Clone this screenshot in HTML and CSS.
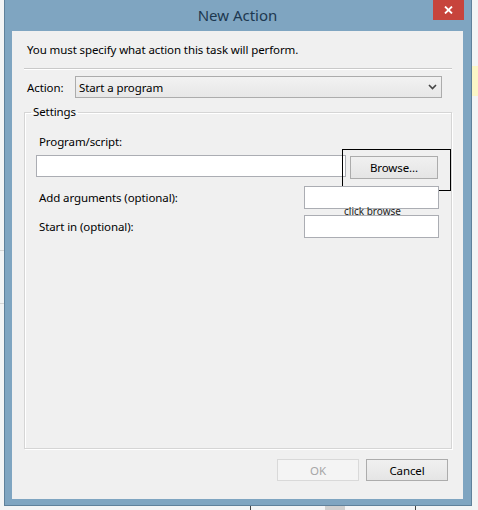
FILE: index.html
```html
<!DOCTYPE html>
<html>
<head>
<meta charset="utf-8">
<title>New Action</title>
<link rel="stylesheet" href="styles.css">
</head>
<body>
<div class="window">
  <div class="titlebar">
    <span class="title">New Action</span>
    <div class="close">
      <svg width="9" height="8" viewBox="0 0 9 8"><path d="M1 0.5 L8 7.5 M8 0.5 L1 7.5" stroke="#fff" stroke-width="1.8" fill="none"/></svg>
    </div>
  </div>
  <div class="client">
    <p class="intro">You must specify what action this task will perform.</p>
    <div class="sep"></div>
    <div class="action-row">
      <span class="action-label">Action:</span>
      <div class="combo">
        <span>Start a program</span>
        <svg class="chev" width="9" height="6" viewBox="0 0 9 6"><polyline points="1,1 4.5,4.5 8,1" stroke="#444" stroke-width="1.6" fill="none"/></svg>
      </div>
    </div>
    <fieldset class="settings">
      <legend>Settings</legend>
      <div class="field-label">Program/script:</div>
      <div class="program-row">
        <div class="textbox program"></div>
        <div class="btn browse">Browse...</div>
        <div class="highlight"></div>
      </div>
      <div class="opt-row">
        <span class="opt-label">Add arguments (optional):</span>
        <div class="textbox small"></div>
        <span class="note">click browse</span>
      </div>
      <div class="opt-row second">
        <span class="opt-label">Start in (optional):</span>
        <div class="textbox small"></div>
      </div>
    </fieldset>
    <div class="buttons">
      <div class="btn disabled">OK</div>
      <div class="btn">Cancel</div>
    </div>
  </div>
</div>
</body>
</html>
```
FILE: styles.css
```css
* { box-sizing: border-box; }
html, body { margin: 0; }
body {
  width: 478px;
  height: 510px;
  overflow: hidden;
  padding-left: 4px;
  background-color: #f3f4f5;
  background-image:
    linear-gradient(#fbf6c6, #fbf6c6),
    linear-gradient(#d6d6d6, #d6d6d6),
    linear-gradient(#d6d6d6, #d6d6d6),
    linear-gradient(#444, #444),
    linear-gradient(#cfcfcf, #cfcfcf),
    linear-gradient(#444, #444);
  background-repeat: no-repeat;
  background-size: 6px 30px, 4px 1px, 4px 1px, 1px 4px, 20px 4px, 1px 4px;
  background-position: right 0 top 66px, 0 250px, 0 303px, 250px 506px, 325px 506px, 415px 506px;
  font-family: "Segoe UI", "Noto Sans", "Open Sans", sans-serif;
  font-size: 11.5px;
  letter-spacing: -0.1px;
  color: #000;
}
.window {
  position: relative;
  width: 468px;
  height: 506px;
  background: #7fa5c1;
  border: 1px solid #5f819b;
  border-top: 0;
  padding: 0 8px 6px 7px;
  display: flex;
  flex-direction: column;
}
.titlebar {
  height: 31px;
  padding-bottom: 2px;
  display: flex;
  align-items: center;
  justify-content: center;
}
.title {
  font-size: 15px;
  letter-spacing: 0;
  color: #1d3850;
  line-height: 20px;
}
.close {
  position: absolute;
  top: 0;
  right: 7px;
  width: 31px;
  height: 20px;
  background: #c7443c;
  display: flex;
  align-items: center;
  justify-content: center;
}
.client {
  flex: 1;
  background: #f0f0f0;
  display: flex;
  flex-direction: column;
}
.intro {
  margin: 11px 0 0 15px;
  line-height: 16px;
}
.sep {
  margin: 10px 0 0 12px;
  width: 428px;
  height: 2px;
  border-top: 1px solid #c9c9c9;
  border-bottom: 1px solid #fff;
}
.action-row {
  display: flex;
  align-items: center;
  margin: 6px 0 0 15px;
  height: 22px;
}
.action-label { width: 48px; }
.combo {
  width: 367px;
  height: 22px;
  border: 1px solid #acacac;
  background: linear-gradient(#f2f2f2, #e7e7e7);
  display: flex;
  align-items: center;
  justify-content: space-between;
  padding: 0 4px 0 3px;
}
.settings {
  margin: 6px 0 0 12px;
  width: 428px;
  flex: 1;
  min-height: 0;
  padding: 0;
  border: 1px solid #d5d5d5;
  box-shadow: inset 1px 1px 0 #fff, 1px 1px 0 #fff;
  min-inline-size: 0;
}
.settings legend {
  margin-left: 6px;
  padding: 0 2px;
  line-height: 16px;
}
.field-label {
  margin: 14px 0 0 14px;
  line-height: 16px;
}
.program-row {
  position: relative;
  display: flex;
  align-items: flex-start;
  margin: 5px 0 0 11px;
  height: 24px;
}
.textbox {
  background: #fff;
  border: 1px solid #abadb3;
}
.textbox.program { width: 310px; height: 22px; }
.textbox.small { width: 135px; height: 23px; }
.btn {
  display: flex;
  align-items: center;
  justify-content: center;
  width: 82px;
  height: 22px;
  border: 1px solid #acacac;
  background: linear-gradient(#f0f0f0, #e5e5e5);
}
.browse {
  margin: 1px 0 0 4px;
  width: 88px;
  height: 23px;
}
.highlight {
  position: absolute;
  left: 306px;
  top: -6px;
  width: 109px;
  height: 42px;
  border: 1px solid #000;
}
.opt-row {
  position: relative;
  display: flex;
  align-items: center;
  margin: 7px 0 0 14px;
  height: 23px;
}
.opt-row.second { margin-top: 6px; }
.opt-label { width: 265px; }
.note {
  position: absolute;
  left: 305px;
  top: 19px;
  font-size: 10px;
  letter-spacing: 0;
  line-height: 12px;
  color: #222;
}
.buttons {
  display: flex;
  gap: 7px;
  margin: 10px 15px 18px auto;
}
.btn.disabled {
  border-color: #d9d9d9;
  background: #f4f4f4;
  color: #a6a6a6;
}
```
